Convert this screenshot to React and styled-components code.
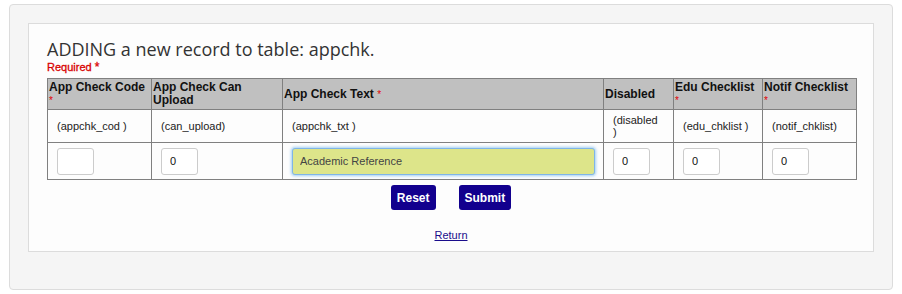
import styled, { createGlobalStyle } from "styled-components";

const GlobalStyle = createGlobalStyle`
  html, body {
    margin: 0;
    padding: 0;
    background: #ffffff;
  }
  body {
    font-family: "Liberation Sans", Arial, sans-serif;
  }
`;

const Page = styled.div`
  padding: 4px 9px 6px 9px;
`;

const OuterPanel = styled.div`
  background: #f5f5f5;
  border: 1px solid #dcdcdc;
  border-radius: 4px;
  padding: 18px;
  height: 248px;
`;

const InnerPanel = styled.div`
  background: #fdfdfd;
  border: 1px solid #dcdcdc;
  padding: 14px 18px 12px 18px;
  height: 201px;
`;

const Title = styled.h1`
  margin: 0;
  font-family: "Open Sans", "Liberation Sans", sans-serif;
  font-weight: 400;
  font-size: 18px;
  line-height: 22px;
  color: #333333;
`;

const Required = styled.div`
  font-size: 11px;
  line-height: 14px;
  color: #d80000;
  font-weight: 400;
  -webkit-text-stroke: 0.3px #d80000;
  margin-bottom: 4px;
`;

const Star = styled.span`
  color: #e00000;
  font-size: ${(p) => (p.$small ? "10px" : "12px")};
  font-weight: 400;
`;

const Table = styled.table`
  width: 100%;
  border-collapse: collapse;
  table-layout: fixed;
  font-size: 11px;
  color: #222;
`;

const Row = styled.tr`
  height: ${(p) => p.$h}px;
`;

const HeadCell = styled.th`
  background: #c0c0c0;
  border: 1px solid #808080;
  text-align: left;
  vertical-align: middle;
  font-size: 12px;
  line-height: 13px;
  font-weight: 700;
  color: #111;
  padding: 1px 2px 1px 1px;
`;

const NameCell = styled.td`
  border: 1px solid #808080;
  padding: 0 12px 0 9px;
  vertical-align: middle;
  line-height: 12px;
`;

const InputCell = styled.td`
  border: 1px solid #808080;
  padding: 0 9px;
  vertical-align: middle;
`;

const SmallInput = styled.input`
  box-sizing: border-box;
  display: block;
  width: 37px;
  height: 27px;
  border: 1px solid #cccccc;
  border-radius: 3px;
  background: #ffffff;
  padding: 0 8px;
  font-family: "Liberation Sans", Arial, sans-serif;
  font-size: 11px;
  color: #111;
  outline: none;
`;

const TextInput = styled.input`
  box-sizing: border-box;
  display: block;
  width: 303px;
  height: 27px;
  border: 1px solid #7fb5e8;
  border-radius: 3px;
  background: #dde58a;
  box-shadow: 0 0 3px 1px rgba(102, 175, 233, 0.6);
  padding: 0 7px;
  font-family: "Liberation Sans", Arial, sans-serif;
  font-size: 11px;
  color: #444;
  outline: none;
`;

const ButtonRow = styled.div`
  display: flex;
  justify-content: center;
  gap: 23px;
  margin-top: 5px;
`;

const Button = styled.button`
  height: 25px;
  padding: 0 6px;
  border: none;
  border-radius: 3px;
  background: #12008e;
  color: #ffffff;
  font-family: "Liberation Sans", Arial, sans-serif;
  font-size: 12px;
  font-weight: 700;
  cursor: pointer;
`;

const LinkRow = styled.div`
  text-align: center;
  margin-top: 15px;
`;

const ReturnLink = styled.a`
  font-size: 11px;
  color: #1a0d8c;
  text-decoration: underline;
`;

const columns = [
  { label: "App Check Code", req: true, name: "(appchk_cod )", width: 104, value: "" },
  { label: "App Check Can Upload", req: false, name: "(can_upload)", width: 131, value: "0" },
  { label: "App Check Text", req: true, name: "(appchk_txt )", width: 321, value: "Academic Reference", wide: true },
  { label: "Disabled", req: false, name: "(disabled )", width: 70, value: "0" },
  { label: "Edu Checklist", req: true, name: "(edu_chklist )", width: 89, value: "0" },
  { label: "Notif Checklist", req: true, name: "(notif_chklist)", width: 94, value: "0" },
];

export default function App() {
  return (
    <>
      <GlobalStyle />
      <Page>
        <OuterPanel>
          <InnerPanel>
            <Title>ADDING a new record to table: appchk.</Title>
            <Required>
              Required <Star>*</Star>
            </Required>
            <Table>
              <colgroup>
                {columns.map((c) => (
                  <col key={c.name} style={{ width: c.width }} />
                ))}
              </colgroup>
              <thead>
                <Row $h={31}>
                  {columns.map((c) => (
                    <HeadCell key={c.name}>
                      {c.label}
                      {c.req && (
                        <>
                          {" "}
                          <Star $small>*</Star>
                        </>
                      )}
                    </HeadCell>
                  ))}
                </Row>
              </thead>
              <tbody>
                <Row $h={33}>
                  {columns.map((c) => (
                    <NameCell key={c.name}>{c.name}</NameCell>
                  ))}
                </Row>
                <Row $h={37}>
                  {columns.map((c) => (
                    <InputCell key={c.name}>
                      {c.wide ? (
                        <TextInput defaultValue={c.value} />
                      ) : (
                        <SmallInput defaultValue={c.value} />
                      )}
                    </InputCell>
                  ))}
                </Row>
              </tbody>
            </Table>
            <ButtonRow>
              <Button type="reset">Reset</Button>
              <Button type="submit">Submit</Button>
            </ButtonRow>
            <LinkRow>
              <ReturnLink href="#">Return</ReturnLink>
            </LinkRow>
          </InnerPanel>
        </OuterPanel>
      </Page>
    </>
  );
}
